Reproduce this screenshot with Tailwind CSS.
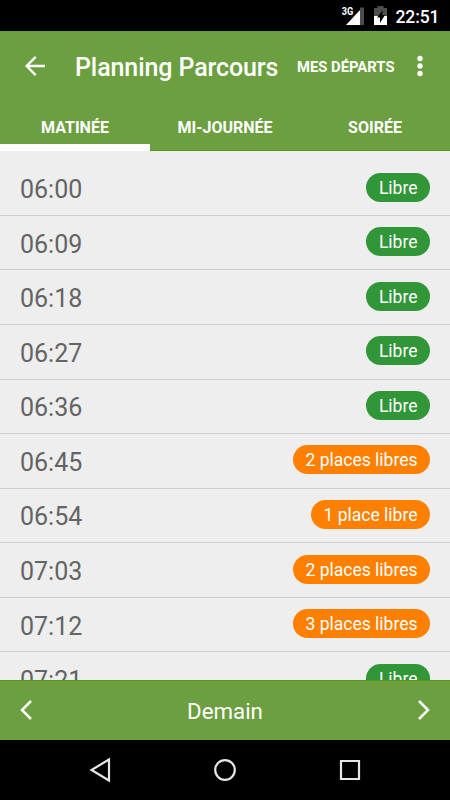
<!DOCTYPE html>
<html lang="fr">
<head>
<meta charset="utf-8">
<title>Planning Parcours</title>
<script src="https://cdn.jsdelivr.net/npm/@tailwindcss/browser@4"></script>
</head>
<body class="bg-black">
<div class="flex flex-col w-[450px] h-[800px] overflow-hidden font-['Roboto',sans-serif] text-white">
  <div class="flex items-center h-[31px] shrink-0 bg-black pl-[341px]">
    <svg class="shrink-0" width="50" height="31" viewBox="0 0 50 31">
      <path d="M19 7.500h4V25h-4z" fill="#4d4d4d"/>
      <path d="M5 25 19 10v15z" fill="#fff"/>
      <text x="0.800" y="15" font-size="10.500" font-weight="700" textLength="11.500" lengthAdjust="spacingAndGlyphs" fill="#fff">3G</text>
      <path d="M33 16V8h3.500V6h6v2H46v8z" fill="#4d4d4d"/>
      <path d="M33 16h13v9H33z" fill="#fff"/>
      <path d="m42 10-6 7.500h3V23l5-8h-3z" fill="#000"/>
    </svg>
    <div class="ml-[4.500px] text-[17.5px] leading-[31px] pt-[3px] tracking-[-0.1px] font-medium whitespace-nowrap">22:51</div>
  </div>
  <header class="shrink-0 h-[120px] bg-[#6b9f40] border-b border-[#569711] flex flex-col">
    <div class="flex items-center h-[70px] pl-[25px]">
      <svg width="20" height="20" viewBox="0 0 20 20" fill="none" stroke="#fff" stroke-width="2.4"><path d="M20 10H2M10.700.9 1.600 10l9.100 9.100"/></svg>
      <h1 class="ml-[30px] w-[222px] pt-[5px] text-[25px] leading-[30px] tracking-[-0.1px] font-medium whitespace-nowrap">Planning Parcours</h1>
      <div class="w-[99px] pt-[2px] text-[14.8px] leading-[20px] font-bold whitespace-nowrap">MES DÉPARTS</div>
      <svg class="ml-[20px]" width="8" height="22" viewBox="0 0 8 22" fill="#fff"><circle cx="4" cy="3.500" r="2.700"/><circle cx="4" cy="11" r="2.700"/><circle cx="4" cy="18.500" r="2.700"/></svg>
    </div>
    <nav class="grid grid-cols-3 h-[50px] text-center text-[16px] leading-[55px] font-bold">
      <div class="h-[51px] border-b-[7px] border-white">MATINÉE</div>
      <div>MI-JOURNÉE</div>
      <div>SOIRÉE</div>
    </nav>
  </header>
  <main id="slots" class="flex-1 min-h-0 overflow-hidden bg-[#eee] pt-[10.4px]"></main>
  <footer class="shrink-0 h-[60px] bg-[#6b9f40] border-t border-[#569711] flex items-center justify-between px-[20px]">
    <svg class="-mt-[2px]" width="13" height="20" viewBox="0 0 13 20" fill="none" stroke="#fff" stroke-width="2.500"><path d="M11 1 2 10l9 9"/></svg>
    <div class="text-[22.3px] leading-[30px]">Demain</div>
    <svg class="-mt-[2px]" width="13" height="20" viewBox="0 0 13 20" fill="none" stroke="#fff" stroke-width="2.500"><path d="m2 1 9 9-9 9"/></svg>
  </footer>
  <div class="shrink-0 h-[60px] bg-black">
    <svg width="450" height="60" viewBox="0 0 450 60" fill="none" stroke="#e6e6e6" stroke-width="2.200">
      <path d="M109 19.500v21L91.500 30z"/><circle cx="225" cy="30" r="9.800"/><path d="M341 21h18v18h-18z"/>
    </svg>
  </div>
</div>
<script>
const free = 'bg-[#309637]', partial = 'bg-[#ff8000]';
const slots = [['06:00','Libre'],['06:09','Libre'],['06:18','Libre'],['06:27','Libre'],['06:36','Libre'],['06:45','2 places libres'],['06:54','1 place libre'],['07:03','2 places libres'],['07:12','3 places libres'],['07:21','Libre']];
document.getElementById('slots').innerHTML = slots.map(([time, label]) => `
  <div class="flex justify-between items-start h-[54.56px] px-[20px] pt-[11.3px] border-b border-[#cfcfcf]">
    <span class="text-[25px] leading-[30px] pt-[2.5px] text-[#646464]">${time}</span>
    <span class="h-[29px] rounded-full px-[12.5px] text-[17.5px] leading-[30.5px] ${label === 'Libre' ? free : partial}">${label}</span>
  </div>`).join('');
</script>
</body>
</html>
